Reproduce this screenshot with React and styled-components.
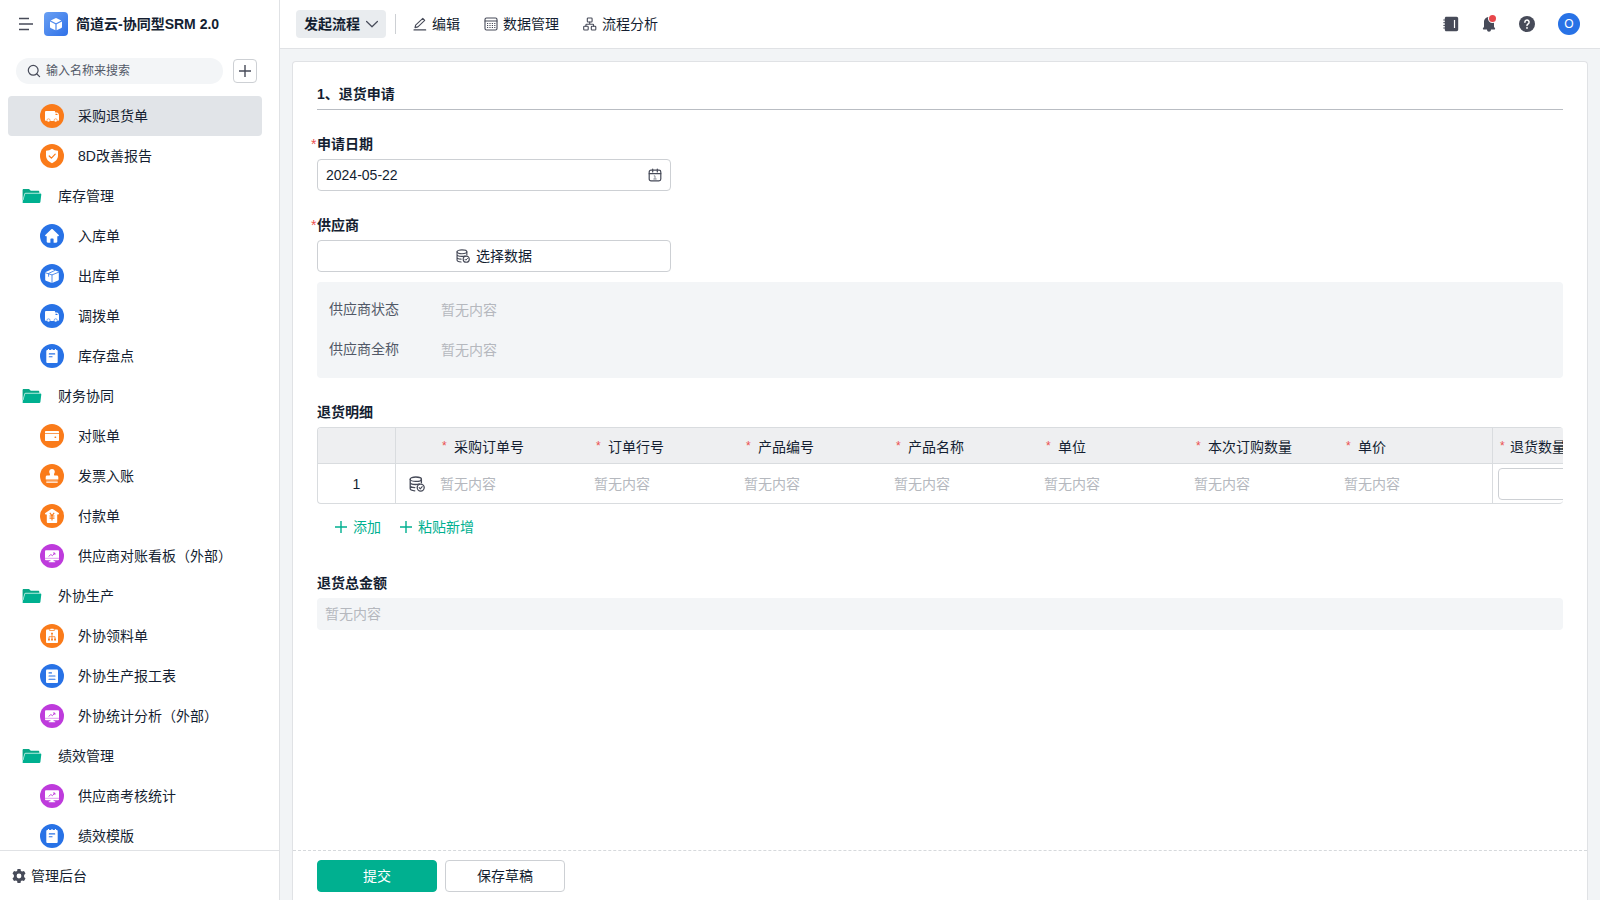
import React from 'react';
import styled, { createGlobalStyle } from 'styled-components';

const c = {
  text: '#141e31',
  sub: '#525967',
  muted: '#b5b8be',
  line: '#e0e2e5',
  border: '#cdd0d4',
  page: '#f2f4f6',
  soft: '#f3f5f7',
  green: '#00b090',
  red: '#eb5050',
  orange: '#fa7b1a',
  blue: '#2872e6',
  purple: '#be3bdc',
  icon: '#474b59',
};

const GlobalStyle = createGlobalStyle`
  *, *::before, *::after { box-sizing: border-box; }
  body {
    margin: 0;
    color: ${c.text};
    font: 14px/20px "Liberation Sans", "Noto Sans CJK SC", sans-serif;
    background: ${c.page};
  }
  button, input { font: inherit; color: inherit; }
  button { cursor: pointer; }
  svg { display: block; flex: none; }
`;

const Layout = styled.div`
  display: flex;
  height: 100vh;
  overflow: hidden;
`;

/* ---------- sidebar ---------- */

const Sidebar = styled.aside`
  display: flex;
  flex-direction: column;
  flex: none;
  width: 280px;
  background: #fff;
  border-right: 1px solid ${c.line};
`;

const Brand = styled.div`
  display: flex;
  align-items: center;
  gap: 8px;
  height: 48px;
  flex: none;
  padding: 0 16px 0 18px;
`;

const BrandName = styled.h1`
  margin: 0;
  font-size: 14px;
  font-weight: 700;
  line-height: 20px;
`;

const PlainButton = styled.button`
  display: flex;
  align-items: center;
  gap: ${(p) => p.$gap || 0}px;
  padding: 0;
  border: 0;
  background: none;
  color: ${(p) => p.$color || c.icon};
`;

const FooterText = styled.span`
  color: ${c.text};
`;

const BrandLogo = styled.span`
  display: grid;
  place-items: center;
  width: 24px;
  height: 24px;
  border-radius: 4px;
  background: linear-gradient(135deg, #6aa0f3, #2f71e8);
`;

const SearchRow = styled.div`
  display: flex;
  align-items: center;
  gap: 10px;
  flex: none;
  height: 48px;
  padding: 0 22px 2px 16px;
`;

const SearchBox = styled.label`
  display: flex;
  align-items: center;
  flex: 1;
  gap: 5px;
  min-width: 0;
  height: 26px;
  padding: 0 11px;
  border-radius: 13px;
  background: ${c.soft};
  color: ${c.icon};
`;

const SearchInput = styled.input`
  flex: 1;
  min-width: 0;
  padding: 0;
  border: 0;
  outline: 0;
  background: none;
  font-size: 12px;
  &::placeholder { color: ${c.sub}; opacity: 1; }
`;

const AddButton = styled.button`
  display: grid;
  place-items: center;
  width: 24px;
  height: 24px;
  padding: 0;
  border: 1px solid ${c.border};
  border-radius: 4px;
  background: #fff;
  color: ${c.icon};
`;

const NavList = styled.ul`
  flex: 1;
  min-height: 0;
  margin: 0;
  padding: 0 17px 0 8px;
  overflow: hidden;
  list-style: none;
`;

const NavLink = styled.a`
  display: flex;
  align-items: center;
  gap: 14px;
  height: 40px;
  padding-left: ${(p) => (p.$folder ? 12 : 32)}px;
  border-radius: 4px;
  background: ${(p) => (p.$active ? '#e1e4e8' : 'transparent')};
  color: ${c.text};
  text-decoration: none;
`;

const SidebarFooter = styled.div`
  display: flex;
  align-items: center;
  flex: none;
  height: 50px;
  padding: 0 12px;
  border-top: 1px solid ${c.line};
`;

/* ---------- top bar ---------- */

const Main = styled.main`
  display: flex;
  flex-direction: column;
  flex: 1;
  min-width: 0;
`;

const TopBar = styled.header`
  display: flex;
  align-items: center;
  justify-content: space-between;
  flex: none;
  height: 49px;
  padding: 0 20px 0 16px;
  background: #fff;
  border-bottom: 1px solid ${c.line};
`;

const Tools = styled.div`
  display: flex;
  align-items: center;
  gap: ${(p) => p.$gap}px;
`;

const StartButton = styled.button`
  display: flex;
  align-items: center;
  gap: 6px;
  height: 28px;
  padding: 0 8px;
  border: 0;
  border-radius: 4px;
  background: #e9ecef;
  font-weight: 700;
`;

const Divider = styled.span`
  width: 1px;
  height: 20px;
  margin: 0 17px 0 9px;
  background: ${c.border};
`;

const BellWrap = styled.span`
  position: relative;
`;

const Dot = styled.span`
  position: absolute;
  top: -1px;
  right: 1px;
  width: 7px;
  height: 7px;
  border-radius: 50%;
  background: #e8474b;
  box-shadow: 0 0 0 1px #fff;
`;

const Avatar = styled.button`
  width: 22px;
  height: 22px;
  padding: 0;
  border: 0;
  border-radius: 50%;
  background: ${c.blue};
  color: #fff;
  font-size: 12px;
  line-height: 22px;
`;

/* ---------- form ---------- */

const Content = styled.div`
  display: flex;
  flex: 1;
  min-height: 0;
  padding: 12px 12px 0;
`;

const Card = styled.form`
  display: flex;
  flex-direction: column;
  flex: 1;
  min-width: 0;
  border: 1px solid ${c.line};
  border-bottom: 0;
  border-radius: 4px 4px 0 0;
  background: #fff;
`;

const FormBody = styled.div`
  flex: 1;
  min-height: 0;
  padding: 22px 24px;
  overflow: hidden;
`;

const SectionTitle = styled.h2`
  margin: 0 0 24px;
  padding-bottom: 5px;
  border-bottom: 1px solid #b9bdc3;
  font-size: 14px;
  font-weight: 700;
  line-height: 20px;
`;

const Field = styled.div`
  margin-bottom: ${(p) => p.$after || 24}px;
`;

const FieldLabel = styled.label`
  position: relative;
  display: block;
  margin-bottom: 5px;
  font-weight: 700;
`;

const RequiredMark = styled.span`
  position: absolute;
  left: -6px;
  color: ${c.red};
  font-weight: 400;
`;

const DateBox = styled.div`
  display: flex;
  align-items: center;
  width: 354px;
  max-width: 100%;
  height: 32px;
  padding: 0 8px;
  border: 1px solid ${c.border};
  border-radius: 4px;
`;

const DateInput = styled.input`
  flex: 1;
  min-width: 0;
  padding: 0;
  border: 0;
  outline: 0;
  background: none;
`;

const SelectDataButton = styled.button`
  display: flex;
  align-items: center;
  justify-content: center;
  gap: 6px;
  width: 354px;
  max-width: 100%;
  height: 32px;
  padding: 0;
  border: 1px solid ${c.border};
  border-radius: 4px;
  background: #fff;
`;

const SupplierPanel = styled.dl`
  margin: 10px 0 0;
  padding: 7px 12px 9px;
  border-radius: 4px;
  background: ${c.soft};
`;

const SupplierRow = styled.div`
  display: flex;
  align-items: center;
  height: 40px;
`;

const SupplierTerm = styled.dt`
  width: 112px;
  color: ${c.sub};
`;

const SupplierValue = styled.dd`
  margin: 0;
  padding-top: 2px;
  color: ${c.muted};
`;

const TableFrame = styled.div`
  overflow: hidden;
  border: 1px solid #d9dcdf;
  border-right: 0;
  border-radius: 4px;
`;

const DetailTable = styled.table`
  width: 1324px;
  table-layout: fixed;
  border-collapse: separate;
  border-spacing: 0;
`;

const HeadCell = styled.th`
  height: 36px;
  padding: 2px 0 0 ${(p) => (p.$tight ? 7 : 10)}px;
  border-right: ${(p) => (p.$edge ? '1px solid #d9dcdf' : '0')};
  border-bottom: 1px solid #d9dcdf;
  background: #eeeff1;
  font-weight: 400;
  text-align: left;
  white-space: nowrap;
`;

const HeadMark = styled.span`
  display: inline-block;
  width: ${(p) => (p.$tight ? 10 : 12)}px;
  color: ${c.red};
  font-size: 12px;
  line-height: 16px;
  vertical-align: 2px;
`;

const Cell = styled.td`
  height: 39px;
  padding: 0 0 0 ${(p) => p.$pad ?? 8}px;
  border-right: ${(p) => (p.$edge ? '1px solid #d9dcdf' : '0')};
  color: ${(p) => (p.$index ? c.text : c.muted)};
  text-align: ${(p) => (p.$index ? 'center' : 'left')};
`;

const CellInput = styled.input`
  display: block;
  width: 140px;
  height: 32px;
  padding: 0 8px;
  border: 1px solid ${c.border};
  border-radius: 4px;
`;

const RowActions = styled.div`
  display: flex;
  gap: 19px;
  padding: 13px 18px 0;
`;

const EmptyInput = styled.input`
  display: block;
  width: 100%;
  height: 32px;
  padding: 0 8px;
  border: 0;
  border-radius: 4px;
  background: ${c.soft};
  &::placeholder { color: ${c.muted}; opacity: 1; }
`;

const FormFooter = styled.footer`
  display: flex;
  align-items: center;
  gap: 8px;
  flex: none;
  height: 50px;
  padding: 0 24px;
  border-top: 1px dashed #d6d9dc;
`;

const ActionButton = styled.button`
  width: 120px;
  height: 32px;
  padding: 0;
  border: 1px solid ${(p) => (p.$primary ? c.green : c.border)};
  border-radius: 4px;
  background: ${(p) => (p.$primary ? c.green : '#fff')};
  color: ${(p) => (p.$primary ? '#fff' : c.text)};
`;

/* ---------- icons ---------- */

const stroke = { fill: 'none', stroke: 'currentColor', strokeLinecap: 'round', strokeLinejoin: 'round' };

const glyphs = {
  truck: (k) => (
    <>
      <path fill="#fff" d="M6.300 7h7.800c.7 0 1.100.4 1.100 1.100v.4h1.600c1.400 0 2.200 1.600 2.200 3.200v4.100c0 .7-.4 1.100-1.100 1.100H6.100c-.7 0-1.100-.4-1.100-1.100V8.200C5 7.400 5.500 7 6.300 7z" />
      <path fill={k} d="M15.500 9.700h1.100c.5 0 .9.500 1.100 1.300h-2.200z" />
      <circle cx="8.500" cy="16.400" r="1.600" fill="#fff" stroke={k} strokeWidth=".6" />
      <circle cx="15.700" cy="16.400" r="1.600" fill="#fff" stroke={k} strokeWidth=".6" />
    </>
  ),
  shield: (k) => (
    <>
      <path fill="#fff" d="M12 4.800c1.800 1.300 3.700 1.900 6 2v4.700c0 3.600-2.500 6.200-6 7.700-3.500-1.500-6-4.100-6-7.700V6.800c2.300-.1 4.200-.7 6-2z" />
      <path fill="none" stroke={k} strokeWidth="1.200" strokeLinecap="round" strokeLinejoin="round" d="M9.200 12l2.200 2.200 3.800-4" />
    </>
  ),
  house: () => (
    <path fill="#fff" d="M11.300 5.300c.4-.4 1-.4 1.400 0l6 5.700c.5.500.200 1.200-.5 1.200h-.9v5.400c0 .7-.4 1.100-1.100 1.100h-2.600v-3.400c0-.5-.3-.8-.8-.8h-1.600c-.5 0-.8.3-.8.8v3.400H7.800c-.7 0-1.100-.4-1.100-1.100v-5.400h-.9c-.7 0-1-.7-.5-1.200z" />
  ),
  box: (k) => (
    <>
      <path fill="#fff" d="M5.200 8.300l6-2.800c.5-.2 1.100-.2 1.600 0l6 2.300v7.700c0 .5-.2.800-.7 1l-6.100 2.600-6.100-2.300c-.5-.2-.7-.5-.7-1z" />
      <path fill="none" stroke={k} strokeWidth=".8" d="M4.800 8.600l7.200 2.300 7.200-2.900M12 10.900v8.400M8.200 9.600l7-3.300M8.600 9.900v2.800" />
    </>
  ),
  notes: (k) => (
    <>
      <rect x="6.300" y="6" width="11.400" height="13" rx="1" fill="#fff" />
      <path stroke="#fff" strokeWidth="1.200" d="M8.500 5v2M12 5v2M15.500 5v2" />
      <path stroke={k} strokeWidth="1.100" strokeLinecap="round" d="M9.300 9.900h5.400M9.300 12.700h2.800" />
    </>
  ),
  wallet: (k) => (
    <>
      <path fill="#fff" d="M6 7h12c.6 0 1 .4 1 1v1.200H5V8c0-.6.400-1 1-1zM5 10.100h14v6c0 .6-.4 1-1 1H6c-.6 0-1-.4-1-1z" />
      <path stroke={k} strokeWidth="1.600" strokeLinecap="round" d="M15.200 13.200h.3" />
    </>
  ),
  stamp: () => (
    <path fill="#fff" d="M12 5c1.700 0 2.800 1.200 2.800 2.700 0 1.100-.8 1.700-.8 2.700 0 .8.500 1.200 1.300 1.200h1.400c1 0 1.600.6 1.600 1.600v2.200H5.700v-2.200c0-1 .6-1.600 1.600-1.600h1.400c.8 0 1.300-.4 1.300-1.200 0-1-.8-1.600-.8-2.700C9.200 6.200 10.300 5 12 5zM6.300 16.700h11.400v.9H6.300zM6.300 18.300h11.400v.7H6.300z" />
  ),
  bank: (k) => (
    <>
      <path fill="#fff" d="M11.300 5.100c.4-.3 1-.3 1.400 0l6 4c.5.400.3 1.300-.4 1.300h-1.100V18c0 .6-.4.900-.9.900H7.700c-.5 0-.9-.3-.9-.9v-7.600H5.700c-.7 0-.9-.9-.4-1.300z" />
      <path fill="none" stroke={k} strokeWidth="1.100" d="M9.800 8.800l2.200 2.800 2.200-2.800M12 11.600v5M9.500 12h5M9.500 14.100h5" />
    </>
  ),
  board: (k) => (
    <>
      <rect x="5" y="6.200" width="14" height="10" rx="1" fill="#fff" />
      <path stroke={k} strokeWidth=".5" d="M5 14.300h14" />
      <path fill="#fff" d="M10.600 16h2.800l.4 1.300h1.400v1H8.800v-1h1.400z" />
      <path fill="none" stroke={k} strokeWidth=".9" strokeLinecap="round" strokeLinejoin="round" d="M8.900 12.200l2-1.700 1.500 1.200 2.200-2.400M13.400 9h1.500v1.500" />
    </>
  ),
  org: (k) => (
    <>
      <rect x="6" y="5.500" width="12" height="13.500" rx="1" fill="#fff" />
      <path fill={k} d="M9.300 5.400h5.400v1.300H9.300zM11.100 8.800h1.800v1.800h-1.800zM8 14.500h1.900v1.900H8zM11.100 14.500h1.800v1.900h-1.800zM14.100 14.500H16v1.900h-1.900z" />
      <path fill="none" stroke={k} strokeWidth=".8" d="M12 10.500v4M9 14.500v-1.800h6v1.800" />
      <rect x="10.200" y="4.700" width="3.600" height="1.400" rx=".5" fill="#fff" />
    </>
  ),
  doc: (k) => (
    <>
      <rect x="6" y="5.500" width="12" height="13.500" rx="1" fill="#fff" />
      <path stroke={k} strokeWidth="1.100" strokeLinecap="round" d="M9 8.900h2.500M9 12h6M9 15.200h6" />
    </>
  ),
};

const EntryIcon = ({ name, color }) => (
  <svg width="24" height="24" viewBox="0 0 24 24" aria-hidden="true">
    <circle cx="12" cy="12" r="12" fill={color} />
    {glyphs[name](color)}
  </svg>
);

const FolderIcon = () => (
  <svg width="24" height="24" viewBox="0 0 24 24" aria-hidden="true">
    <path fill="#08a787" d="M2.600 6.300c0-.8.400-1.200 1.200-1.200h5.200l1.800 1.700h7.400c.7 0 1.100.4 1.100 1.100v1.400H4.800l-2.200 8z" />
    <path fill={c.green} d="M5.800 9.500h14.500c.7 0 1.100.4 1 1.100l-.9 7.500c-.1.700-.5 1-1.200 1H3.400c-.6 0-.9-.4-.8-1l2-7.700c.1-.6.500-.9 1.200-.9z" />
    <path fill="none" stroke="#a6eadb" strokeWidth=".8" d="M3 16l1.700-6c.1-.6.500-.8 1-.8h15" />
  </svg>
);

const MenuIcon = () => (
  <svg width="18" height="18" viewBox="0 0 18 18" {...stroke} strokeWidth="1.600" strokeLinecap="butt" aria-hidden="true">
    <path d="M1 3.500h10M1 9h14M1 14.500h10" />
  </svg>
);

const CubeIcon = () => (
  <svg width="24" height="24" viewBox="0 0 24 24" aria-hidden="true">
    <path fill="#fff" d="M11.400 6.200a1.200 1.200 0 0 1 1.200 0l4.700 2.300L12 11.200 6.700 8.500zM6 9.600l5.400 2.700v6L6.600 15.900a1.100 1.100 0 0 1-.6-1zM18 9.600l-5.400 2.700v6l4.800-2.400c.4-.2.600-.6.600-1z" />
  </svg>
);

const SearchIcon = () => (
  <svg width="14" height="14" viewBox="0 0 14 14" {...stroke} strokeWidth="1.200" aria-hidden="true">
    <circle cx="6.200" cy="6.300" r="4.900" />
    <path d="M9.900 10l2.700 2.700" />
  </svg>
);

const PlusIcon = ({ size = 12 }) => (
  <svg width={size} height={size} viewBox="0 0 12 12" {...stroke} strokeWidth="1.400" strokeLinecap="butt" aria-hidden="true">
    <path d="M6 0v12M0 6h12" />
  </svg>
);

const GearIcon = () => (
  <svg width="14" height="14" viewBox="0 0 14 14" aria-hidden="true">
    <path
      fill="currentColor"
      fillRule="evenodd"
      d="M5.500 0h3l.4 1.900 1.200.7 1.900-.6 1.500 2.500-1.400 1.400v2.200l1.400 1.400-1.500 2.500-1.900-.6-1.200.7-.4 1.900h-3l-.4-1.900-1.200-.7-1.900.6L.500 9.500l1.400-1.400V5.900L.500 4.500 2 2l1.900.6 1.200-.7zM7 4.600a2.400 2.400 0 1 0 0 4.800 2.400 2.400 0 0 0 0-4.800z"
    />
  </svg>
);

const ChevronIcon = () => (
  <svg width="12" height="12" viewBox="0 0 12 12" {...stroke} stroke={c.icon} strokeWidth="1.200" aria-hidden="true">
    <path d="M.6 3.500L6 8.800l5.400-5.300" />
  </svg>
);

const PencilIcon = () => (
  <svg width="14" height="14" viewBox="0 0 14 14" {...stroke} stroke={c.icon} strokeWidth="1.100" aria-hidden="true">
    <path d="M1 12.900h11.700M2.600 8.100l7.200-6.700 1.900 2-6.800 6.500-2.900.7z" />
  </svg>
);

const GridIcon = () => (
  <svg width="14" height="14" viewBox="0 0 14 14" {...stroke} stroke={c.icon} strokeWidth="1.100" aria-hidden="true">
    <rect x="1" y="1" width="12" height="12" rx="1.500" />
    <path d="M1 4h12" />
    <path strokeWidth="1" strokeDasharray="1.200 1.200" strokeLinecap="butt" d="M3 6.500h8.400M3 8.500h8.400M3 10.500h8.400" />
  </svg>
);

const FlowIcon = () => (
  <svg width="14" height="14" viewBox="0 0 14 14" {...stroke} stroke={c.icon} strokeWidth="1.100" aria-hidden="true">
    <rect x="4.300" y="1" width="4.800" height="4" rx=".8" />
    <rect x=".7" y="9.300" width="4.500" height="3.700" rx=".8" />
    <rect x="8.300" y="9.300" width="4.500" height="3.700" rx=".8" />
    <path d="M6.700 5v2.200M2.900 9.300V8c0-.5.300-.8.800-.8h6.100c.5 0 .8.300.8.800v1.300" />
  </svg>
);

const NotebookIcon = () => (
  <svg width="16" height="16" viewBox="0 0 16 16" aria-hidden="true">
    <path fill={c.icon} d="M3.300.8h10.200c1 0 1.700.7 1.700 1.700v11c0 1-.7 1.700-1.700 1.700H3.300c-.9 0-1.500-.6-1.500-1.500V2.300c0-.9.600-1.500 1.500-1.500z" />
    <path stroke={c.icon} strokeWidth="1" d="M.3 4h2M.3 6.700h2M.3 9.400h2M.3 12h2" />
    <path stroke="#fff" strokeWidth="1.200" d="M11.500 4v8" />
  </svg>
);

const BellIcon = () => (
  <svg width="16" height="16" viewBox="0 0 16 16" aria-hidden="true">
    <path fill={c.icon} d="M8 1c3 0 5 2.200 5 5v4.700l1.100 1.900c.2.400 0 .9-.5.900H2.400c-.5 0-.7-.5-.5-.9L3 10.700V6c0-2.800 2-5 5-5zM6 13.400h4c0 1.300-.9 2.300-2 2.300s-2-1-2-2.300z" />
  </svg>
);

const HelpIcon = () => (
  <svg width="16" height="16" viewBox="0 0 16 16" aria-hidden="true">
    <circle cx="8" cy="8" r="8" fill={c.icon} />
    <path fill="none" stroke="#fff" strokeWidth="1.500" strokeLinecap="round" strokeLinejoin="round" d="M5.900 6.200a2.100 2.100 0 1 1 3.400 1.600c-.8.600-1.300.9-1.300 1.700" />
    <circle cx="8" cy="11.900" r=".95" fill="#fff" />
  </svg>
);

const CalendarIcon = () => (
  <svg width="14" height="14" viewBox="0 0 14 14" {...stroke} stroke={c.icon} strokeWidth="1.200" aria-hidden="true">
    <rect x="1.200" y="2.200" width="11.600" height="10.600" rx="1.800" />
    <path d="M1.200 5.700h11.600M4.700 1v3M9.300 1v3" />
    <path stroke="#8d919a" strokeWidth="1" d="M6.200 7.900H7v3M5.700 11h2.600" />
  </svg>
);

const DatabaseIcon = ({ size = 14 }) => (
  <svg width={size} height={size} viewBox="0 0 16 16" {...stroke} stroke={c.icon} strokeWidth="1.300" aria-hidden="true">
    <ellipse cx="6.800" cy="3.200" rx="5.600" ry="2.200" />
    <path d="M1.200 3.200v9.400c0 1.200 1.800 2.100 4.600 2.200M12.400 3.200v3.600M1.200 6.300c0 1.200 2.400 2.200 5.300 2.200 1.500 0 2.800-.2 3.800-.6M1.200 9.500c0 1.200 1.800 2 4.600 2.100" />
    <circle cx="11.700" cy="11.600" r="3.500" />
    <path strokeWidth="1.100" d="M10.200 11.700l1.100 1.100 1.900-2.100" />
  </svg>
);

/* ---------- data ---------- */

const entries = [
  { label: '采购退货单', icon: 'truck', color: c.orange, active: true },
  { label: '8D改善报告', icon: 'shield', color: c.orange },
  { label: '库存管理', folder: true },
  { label: '入库单', icon: 'house', color: c.blue },
  { label: '出库单', icon: 'box', color: c.blue },
  { label: '调拨单', icon: 'truck', color: c.blue },
  { label: '库存盘点', icon: 'notes', color: c.blue },
  { label: '财务协同', folder: true },
  { label: '对账单', icon: 'wallet', color: c.orange },
  { label: '发票入账', icon: 'stamp', color: c.orange },
  { label: '付款单', icon: 'bank', color: c.orange },
  { label: '供应商对账看板（外部）', icon: 'board', color: c.purple },
  { label: '外协生产', folder: true },
  { label: '外协领料单', icon: 'org', color: c.orange },
  { label: '外协生产报工表', icon: 'doc', color: c.blue },
  { label: '外协统计分析（外部）', icon: 'board', color: c.purple },
  { label: '绩效管理', folder: true },
  { label: '供应商考核统计', icon: 'board', color: c.purple },
  { label: '绩效模版', icon: 'notes', color: c.blue },
];

const columns = [
  { label: '采购订单号', width: 154 },
  { label: '订单行号', width: 150 },
  { label: '产品编号', width: 150 },
  { label: '产品名称', width: 150 },
  { label: '单位', width: 150 },
  { label: '本次订购数量', width: 150 },
  { label: '单价', width: 157, edge: true },
];

const supplierInfo = ['供应商状态', '供应商全称'];

const EMPTY = '暂无内容';

export default function App() {
  return (
    <>
      <GlobalStyle />
      <Layout>
        <Sidebar>
          <Brand>
            <PlainButton type="button" aria-label="收起菜单"><MenuIcon /></PlainButton>
            <BrandLogo><CubeIcon /></BrandLogo>
            <BrandName>简道云-协同型SRM 2.0</BrandName>
          </Brand>
          <SearchRow>
            <SearchBox>
              <SearchIcon />
              <SearchInput type="text" placeholder="输入名称来搜索" aria-label="输入名称来搜索" />
            </SearchBox>
            <AddButton type="button" aria-label="新建"><PlusIcon /></AddButton>
          </SearchRow>
          <NavList>
            {entries.map((e) => (
              <li key={e.label}>
                <NavLink href="#" $folder={e.folder} $active={e.active}>
                  {e.folder ? <FolderIcon /> : <EntryIcon name={e.icon} color={e.color} />}
                  {e.label}
                </NavLink>
              </li>
            ))}
          </NavList>
          <SidebarFooter>
            <PlainButton type="button" $gap={5}>
              <GearIcon />
              <FooterText>管理后台</FooterText>
            </PlainButton>
          </SidebarFooter>
        </Sidebar>

        <Main>
          <TopBar>
            <Tools $gap={0}>
              <StartButton type="button">发起流程<ChevronIcon /></StartButton>
              <Divider />
              <Tools $gap={24}>
                <PlainButton type="button" $gap={5} $color={c.text}><PencilIcon />编辑</PlainButton>
                <PlainButton type="button" $gap={5} $color={c.text}><GridIcon />数据管理</PlainButton>
                <PlainButton type="button" $gap={5} $color={c.text}><FlowIcon />流程分析</PlainButton>
              </Tools>
            </Tools>
            <Tools $gap={23}>
              <Tools $gap={22}>
                <PlainButton type="button" aria-label="通讯录"><NotebookIcon /></PlainButton>
                <PlainButton type="button" aria-label="消息">
                  <BellWrap><BellIcon /><Dot /></BellWrap>
                </PlainButton>
                <PlainButton type="button" aria-label="帮助"><HelpIcon /></PlainButton>
              </Tools>
              <Avatar type="button">O</Avatar>
            </Tools>
          </TopBar>

          <Content>
            <Card onSubmit={(e) => e.preventDefault()}>
              <FormBody>
                <SectionTitle>1、退货申请</SectionTitle>

                <Field>
                  <FieldLabel htmlFor="apply-date"><RequiredMark>*</RequiredMark>申请日期</FieldLabel>
                  <DateBox>
                    <DateInput id="apply-date" type="text" defaultValue="2024-05-22" />
                    <CalendarIcon />
                  </DateBox>
                </Field>

                <Field>
                  <FieldLabel htmlFor="supplier"><RequiredMark>*</RequiredMark>供应商</FieldLabel>
                  <SelectDataButton id="supplier" type="button"><DatabaseIcon />选择数据</SelectDataButton>
                  <SupplierPanel>
                    {supplierInfo.map((name) => (
                      <SupplierRow key={name}>
                        <SupplierTerm>{name}</SupplierTerm>
                        <SupplierValue>{EMPTY}</SupplierValue>
                      </SupplierRow>
                    ))}
                  </SupplierPanel>
                </Field>

                <Field $after={36}>
                  <FieldLabel as="div" id="detail-label">退货明细</FieldLabel>
                  <TableFrame>
                    <DetailTable aria-labelledby="detail-label">
                      <colgroup>
                        <col width="78" />
                        <col width="36" />
                        {columns.map((col) => <col key={col.label} width={col.width} />)}
                        <col width="149" />
                      </colgroup>
                      <thead>
                        <tr>
                          <HeadCell $edge />
                          <HeadCell />
                          {columns.map((col) => (
                            <HeadCell key={col.label} scope="col" $edge={col.edge}>
                              <HeadMark>*</HeadMark>
                              {col.label}
                            </HeadCell>
                          ))}
                          <HeadCell scope="col" $tight>
                            <HeadMark $tight>*</HeadMark>
                            <span id="return-qty">退货数量</span>
                          </HeadCell>
                        </tr>
                      </thead>
                      <tbody>
                        <tr>
                          <Cell $edge $index $pad={0}>1</Cell>
                          <Cell $pad={13}><DatabaseIcon size={16} /></Cell>
                          {columns.map((col) => <Cell key={col.label} $edge={col.edge}>{EMPTY}</Cell>)}
                          <Cell $pad={5}><CellInput type="text" aria-labelledby="return-qty" /></Cell>
                        </tr>
                      </tbody>
                    </DetailTable>
                  </TableFrame>
                  <RowActions>
                    <PlainButton type="button" $gap={6} $color={c.green}><PlusIcon />添加</PlainButton>
                    <PlainButton type="button" $gap={6} $color={c.green}><PlusIcon />粘贴新增</PlainButton>
                  </RowActions>
                </Field>

                <Field>
                  <FieldLabel htmlFor="total">退货总金额</FieldLabel>
                  <EmptyInput id="total" type="text" placeholder={EMPTY} readOnly />
                </Field>
              </FormBody>

              <FormFooter>
                <ActionButton type="submit" $primary>提交</ActionButton>
                <ActionButton type="button">保存草稿</ActionButton>
              </FormFooter>
            </Card>
          </Content>
        </Main>
      </Layout>
    </>
  );
}
